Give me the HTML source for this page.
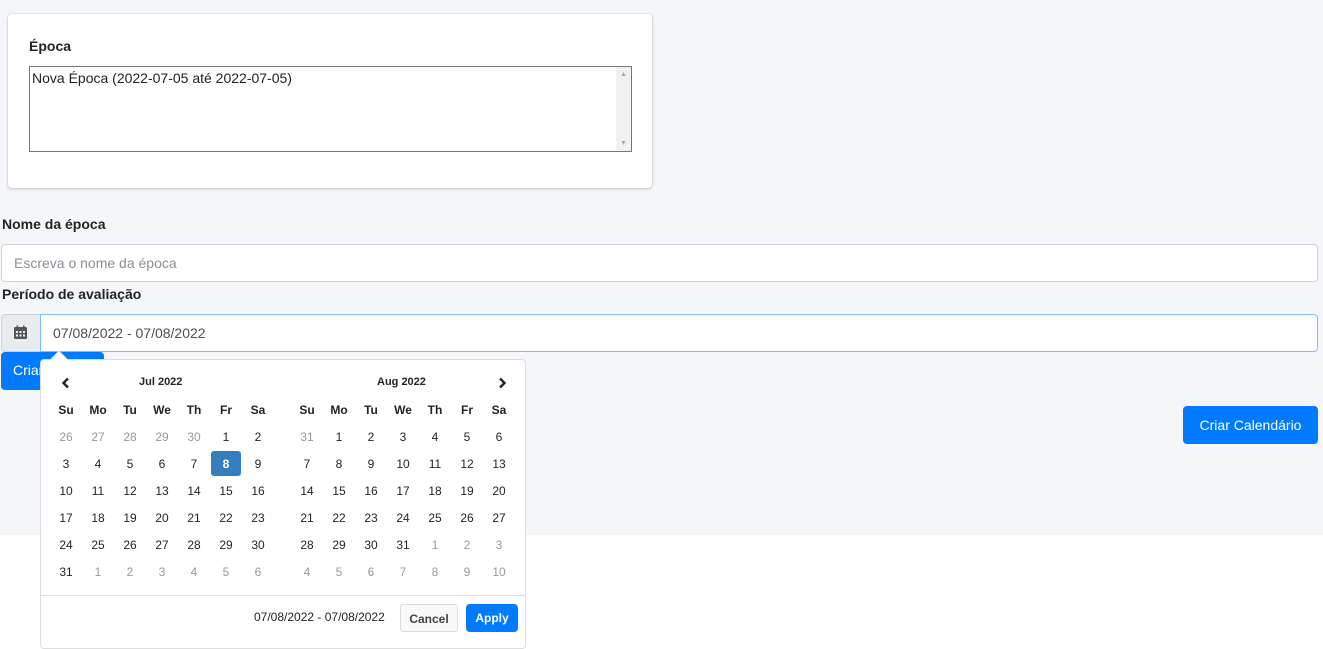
<!DOCTYPE html>
<html><head><meta charset="utf-8"><style>
*{box-sizing:border-box;margin:0;padding:0}
body{width:1323px;height:637px;background:#fff;font-family:"Liberation Sans",sans-serif;position:relative;overflow:hidden;color:#212529}
.bg{position:absolute;left:0;top:0;width:1323px;height:535px;background:#f4f6f9}
.abs{position:absolute}
.card{left:8px;top:14px;width:644px;height:174px;background:#fff;border-radius:4px;box-shadow:0 0 1px rgba(0,0,0,.2),0 1px 3px rgba(0,0,0,.2)}
.lbl{font-weight:bold;font-size:14px;color:#212529}
.ta{left:29px;top:66px;width:603px;height:86px;border:1px solid #767676;background:#fff;font-size:14px;padding:3px 2px;color:#222}
.sb{position:absolute;right:0;top:0;width:15px;height:100%;background:#f1f1f1}
.input{background:#fff;border:1px solid #ced4da;border-radius:4px;font-size:14px}
.btn{background:#007bff;color:#fff;border-radius:4px;font-size:14px;text-align:center}
.cal{left:40px;top:359px;width:486px;height:290px;background:#fff;border:1px solid #ddd;border-radius:4px}
table{border-collapse:collapse;position:absolute}
td{width:32px;height:27px;text-align:center;font-size:12px;color:#212529;padding:0}
td.o{color:#999}
th{width:32px;height:27px;font-size:12px;font-weight:bold;text-align:center}
td.s{background:#357ebd;color:#fff;border-radius:4px;box-shadow:inset 0 0 0 1px #fff;font-weight:bold}
</style></head><body>
<div class="bg"></div>
<div class="abs card"></div>
<div class="abs lbl" style="left:29px;top:38px">Época</div>
<div class="abs ta">Nova Época (2022-07-05 até 2022-07-05)<div class="sb"><span style="position:absolute;left:4px;top:4px;font-size:7px;color:#aaa">▲</span><span style="position:absolute;left:4px;bottom:4px;font-size:7px;color:#aaa">▼</span></div></div>
<div class="abs lbl" style="left:2px;top:216px">Nome da época</div>
<div class="abs input" style="left:1px;top:244px;width:1317px;height:38px;padding:10px 12px;color:#8a9097">Escreva o nome da época</div>
<div class="abs lbl" style="left:2px;top:286px">Período de avaliação</div>
<div class="abs" style="left:1px;top:314px;width:40px;height:38px;background:#e9ecef;border:1px solid #ced4da;border-radius:4px 0 0 4px"></div>
<svg class="abs" style="left:13px;top:325px" width="15" height="15" viewBox="0 0 15 15"><rect x="1" y="2" width="13" height="12" rx="1.5" fill="#555"/><rect x="3.5" y="0.5" width="1.6" height="3" fill="#555"/><rect x="10" y="0.5" width="1.6" height="3" fill="#555"/><g fill="#e9ecef"><rect x="3" y="6" width="2" height="2"/><rect x="6.5" y="6" width="2" height="2"/><rect x="10" y="6" width="2" height="2"/><rect x="3" y="9.5" width="2" height="2"/><rect x="6.5" y="9.5" width="2" height="2"/><rect x="10" y="9.5" width="2" height="2"/></g></svg>
<div class="abs input" style="left:40px;top:314px;width:1278px;height:38px;border-color:#80bdff;border-radius:0 4px 4px 0;padding:10px 12px;color:#495057">07/08/2022 - 07/08/2022</div>
<div class="abs btn" style="left:1px;top:352px;width:103px;height:38px;padding:10px 12px;text-align:left">Criar</div>
<div class="abs btn" style="left:1183px;top:406px;width:135px;height:38px;padding:11px 0">Criar Calendário</div>
<div class="abs cal">
 <div class="abs" style="left:12px;top:-7px;width:12px;height:12px;background:#fff;border-left:1px solid #ddd;border-top:1px solid #ddd;transform:rotate(45deg)"></div>
 <svg class="abs" style="left:20px;top:17px" width="10" height="12" viewBox="0 0 10 12"><path d="M7 1.5 L2.5 6 L7 10.5" fill="none" stroke="#222" stroke-width="2.4"/></svg>
 <div class="abs" style="left:98px;top:16px;font-size:11px;font-weight:bold">Jul 2022</div>
 <div class="abs" style="left:336px;top:16px;font-size:11px;font-weight:bold">Aug 2022</div>
 <svg class="abs" style="left:456px;top:17px" width="10" height="12" viewBox="0 0 10 12"><path d="M3 1.5 L7.5 6 L3 10.5" fill="none" stroke="#222" stroke-width="2.4"/></svg>
 <table style="left:9px;top:36px"><tr><th>Su</th><th>Mo</th><th>Tu</th><th>We</th><th>Th</th><th>Fr</th><th>Sa</th></tr>
 <tr><td class="o">26</td><td class="o">27</td><td class="o">28</td><td class="o">29</td><td class="o">30</td><td>1</td><td>2</td></tr>
 <tr><td>3</td><td>4</td><td>5</td><td>6</td><td>7</td><td class="s">8</td><td>9</td></tr>
 <tr><td>10</td><td>11</td><td>12</td><td>13</td><td>14</td><td>15</td><td>16</td></tr>
 <tr><td>17</td><td>18</td><td>19</td><td>20</td><td>21</td><td>22</td><td>23</td></tr>
 <tr><td>24</td><td>25</td><td>26</td><td>27</td><td>28</td><td>29</td><td>30</td></tr>
 <tr><td>31</td><td class="o">1</td><td class="o">2</td><td class="o">3</td><td class="o">4</td><td class="o">5</td><td class="o">6</td></tr></table>
 <table style="left:250px;top:36px"><tr><th>Su</th><th>Mo</th><th>Tu</th><th>We</th><th>Th</th><th>Fr</th><th>Sa</th></tr>
 <tr><td class="o">31</td><td>1</td><td>2</td><td>3</td><td>4</td><td>5</td><td>6</td></tr>
 <tr><td>7</td><td>8</td><td>9</td><td>10</td><td>11</td><td>12</td><td>13</td></tr>
 <tr><td>14</td><td>15</td><td>16</td><td>17</td><td>18</td><td>19</td><td>20</td></tr>
 <tr><td>21</td><td>22</td><td>23</td><td>24</td><td>25</td><td>26</td><td>27</td></tr>
 <tr><td>28</td><td>29</td><td>30</td><td>31</td><td class="o">1</td><td class="o">2</td><td class="o">3</td></tr>
 <tr><td class="o">4</td><td class="o">5</td><td class="o">6</td><td class="o">7</td><td class="o">8</td><td class="o">9</td><td class="o">10</td></tr></table>
 <div class="abs" style="left:0;top:235px;width:484px;border-top:1px solid #ddd"></div>
 <div class="abs" style="left:213px;top:250px;font-size:12px">07/08/2022 - 07/08/2022</div>
 <div class="abs" style="left:359px;top:244px;width:58px;height:28px;border:1px solid #ddd;border-radius:3px;background:#f8f9fa;font-size:12px;font-weight:bold;text-align:center;padding-top:7px;color:#444">Cancel</div>
 <div class="abs btn" style="left:425px;top:244px;width:52px;height:28px;font-size:12px;font-weight:bold;padding-top:7px">Apply</div>
</div>
</body></html>
